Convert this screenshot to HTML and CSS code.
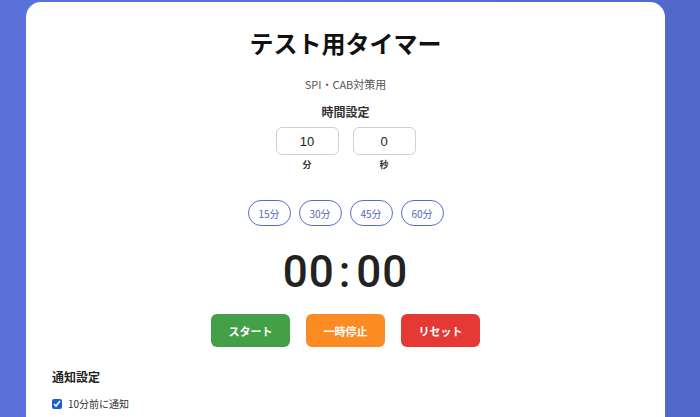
FILE: index.html
```html
<!DOCTYPE html>
<html lang="ja">
<head>
<meta charset="utf-8">
<title>テスト用タイマー</title>
<link rel="stylesheet" href="styles.css">
</head>
<body>
<div class="card">
  <h1 class="title">テスト用タイマー</h1>
  <p class="subtitle">SPI・CAB対策用</p>
  <div class="setting">
    <div class="setting-label">時間設定</div>
    <div class="inputs">
      <div class="field">
        <input class="num" type="text" value="10">
        <span class="unit">分</span>
      </div>
      <div class="field">
        <input class="num" type="text" value="0">
        <span class="unit">秒</span>
      </div>
    </div>
  </div>
  <div class="presets">
    <button class="preset">15分</button>
    <button class="preset">30分</button>
    <button class="preset">45分</button>
    <button class="preset">60分</button>
  </div>
  <div class="display">00<span class="colon">:</span>00</div>
  <div class="controls">
    <button class="ctrl start">スタート</button>
    <button class="ctrl pause">一時停止</button>
    <button class="ctrl reset">リセット</button>
  </div>
  <div class="notify">
    <div class="notify-title">通知設定</div>
    <label class="check"><input type="checkbox" checked> 10分前に通知</label>
  </div>
</div>
</body>
</html>
```
FILE: styles.css
```css
* { box-sizing: border-box; }
html, body { margin: 0; padding: 0; }
body {
  font-family: "Noto Sans CJK JP", sans-serif;
  background: linear-gradient(90deg, #5a72da 0%, #5a71d8 40%, #5068c8 100%);
  min-height: 417px;
  padding: 2px 35px 0 26px;
}
.card {
  background: #fff;
  border-radius: 15px;
  padding: 26px 26px 30px;
  min-height: 430px;
}
.title {
  margin: 0;
  text-align: center;
  font-size: 24px;
  font-weight: 700;
  line-height: 30px;
  color: #111;
}
.subtitle {
  margin: 18px 0 0;
  text-align: center;
  font-size: 11px;
  color: #555;
  line-height: 16px;
}
.setting { margin-top: 12px; text-align: center; }
.setting-label { font-size: 12px; font-weight: 700; color: #333; line-height: 16px; }
.inputs { display: flex; justify-content: center; gap: 14px; margin-top: 7px; }
.field { display: flex; flex-direction: column; align-items: center; }
.num {
  width: 63px; height: 28px;
  border: 1px solid #d0d0d0;
  border-radius: 6px;
  text-align: center;
  font-family: "Liberation Sans", sans-serif;
  font-size: 13px;
  color: #222;
  outline: none;
}
.unit { font-size: 9px; color: #333; margin-top: 3px; line-height: 14px; font-weight: 700; }
.presets { display: flex; justify-content: center; gap: 8px; margin-top: 28px; }
.preset {
  width: 43px; height: 26px;
  border: 1.5px solid #5b6dc4;
  border-radius: 13px;
  background: #fff;
  color: #5366c0;
  font-family: "Noto Sans CJK JP", sans-serif;
  font-size: 10px;
  padding: 0;
}
.display {
  margin-top: 22px;
  text-align: center;
  font-family: Roboto, sans-serif;
  font-weight: 500;
  font-size: 44px;
  line-height: 48px;
  letter-spacing: 1px;
  color: #222;
}
.colon { margin: 0 5px 0 4px; }
.controls { display: flex; justify-content: center; gap: 16px; margin-top: 18px; }
.ctrl {
  width: 79px; height: 33px;
  border: none;
  border-radius: 6px;
  color: #fff;
  font-family: "Noto Sans CJK JP", sans-serif;
  font-weight: 700;
  font-size: 11px;
  padding: 0;
}
.start { background: #43a047; }
.pause { background: #fb8c24; }
.reset { background: #e53935; }
.notify { margin-top: 22px; }
.notify-title { font-size: 12px; font-weight: 700; color: #222; line-height: 16px; }
.check { display: flex; align-items: center; gap: 4px; margin-top: 11px; font-size: 10px; color: #333; }
.check input { width: 10px; height: 10px; margin: 0 2px 0 0; accent-color: #1a5fd0; }
```
